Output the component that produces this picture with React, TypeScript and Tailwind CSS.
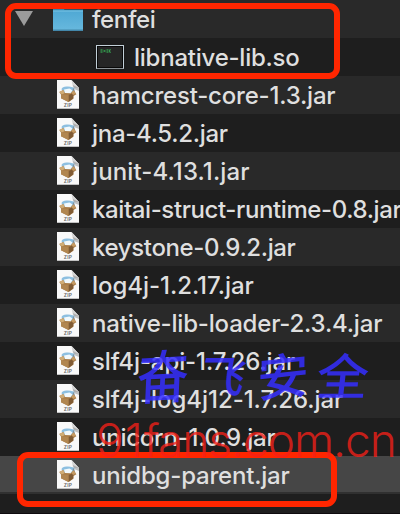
import React from "react";

type Entry = { name: string; kind: "folder" | "exec" | "zip"; tracking: string };

const entries: Entry[] = [
  { name: "fenfei", kind: "folder", tracking: "tracking-[-0.36px]" },
  { name: "libnative-lib.so", kind: "exec", tracking: "tracking-[-0.24px]" },
  { name: "hamcrest-core-1.3.jar", kind: "zip", tracking: "tracking-[-0.2px]" },
  { name: "jna-4.5.2.jar", kind: "zip", tracking: "tracking-[-0.3px]" },
  { name: "junit-4.13.1.jar", kind: "zip", tracking: "tracking-[0.12px]" },
  { name: "kaitai-struct-runtime-0.8.jar", kind: "zip", tracking: "tracking-[-0.4px]" },
  { name: "keystone-0.9.2.jar", kind: "zip", tracking: "tracking-[-0.36px]" },
  { name: "log4j-1.2.17.jar", kind: "zip", tracking: "tracking-[-0.04px]" },
  { name: "native-lib-loader-2.3.4.jar", kind: "zip", tracking: "tracking-[-0.19px]" },
  { name: "slf4j-api-1.7.26.jar", kind: "zip", tracking: "tracking-[-0.1px]" },
  { name: "slf4j-log4j12-1.7.26.jar", kind: "zip", tracking: "tracking-[-0.06px]" },
  { name: "unicorn-1.0.9.jar", kind: "zip", tracking: "tracking-[-0.24px]" },
  { name: "unidbg-parent.jar", kind: "zip", tracking: "tracking-[-0.2px]" },
];

function FolderIcon() {
  return (
    <svg width="30" height="31" viewBox="0 0 30 31" className="shrink-0">
      <defs>
        <linearGradient id="folder" x1="0" y1="0" x2="0" y2="1">
          <stop offset="0" stopColor="#4fa8d4" />
          <stop offset="1" stopColor="#68b9de" />
        </linearGradient>
      </defs>
      <path d="M0 9V5h10l1.500 1.500H30V10H0z" fill="#3786ad" />
      <path d="M0 7.500h30V27q0 1-1 1H1q-1 0-1-1z" fill="url(#folder)" />
      <path d="M0 7.500h30v1H0z" fill="#79c2e4" />
      <path d="M0 26.500h30v.5q0 1-1 1H1q-1 0-1-1z" fill="#4387aa" />
    </svg>
  );
}

function ExecIcon() {
  return (
    <div className="h-6 w-7 shrink-0 border border-[#c3d0d8] border-b-[#8c9195] bg-[#090909] p-px shadow">
      <div className="h-full bg-[#262626] pl-[2px] pt-[2px]">
        <svg width="12" height="4" viewBox="0 0 12 4" className="block">
          <path
            d="M.5.8h2M.5 2h2M.5 3.2h2M3.5.8l2 2.4M5.5.8l-2 2.4M6.5.8h2M6.5 2h2M6.5 3.2h2M11 .8H9.5v2.4H11"
            stroke="#36a852"
            strokeWidth=".9"
            fill="none"
          />
        </svg>
      </div>
    </div>
  );
}

function ZipIcon() {
  return (
    <svg width="22" height="29" viewBox="0 0 22 29" className="shrink-0">
      <path d="M0 0h14.500L22 8v21H0z" fill="#f9f9f9" />
      <path d="M14.500 0 22 8h-4.500q-1.500 0-1.800-2z" fill="#d5d5d5" />
      <path d="M16 5 22 8v3l-5-2z" fill="#888" opacity=".5" />
      <path d="M4.500 9q1-3 6.500-2.500t6.500 1.500l-1 5H6z" fill="#8dbfe0" />
      <path d="M7 9.500 12.500 8.500l3 2-2 2.500H8z" fill="#f2f9fc" />
      <path d="M16 8q2.800 2 1.500 7L15 17z" fill="#7f8f9b" />
      <path d="m2.300 12 4-2 1.500 3 6 .3 3-2.800 2.600 3.700-3 1.800v2.800L11.500 22 4 18.200V14.500z" fill="#aa7e49" />
      <path d="m2.300 12 4-2 1.500 3L5 14.500z" fill="#d1ad76" />
      <path d="m11.500 15 4.800-2v5.200L11.500 22z" fill="#805b34" />
      <path d="m4 14.500 7.500.5V22L4 18.200z" fill="#b18650" />
      <path d="m14.200 12.300 2.600-1.800 2 2.700-2.800 1.900z" fill="#c69b63" />
      <text x="11" y="26.800" textAnchor="middle" fontFamily="Inter, sans-serif" fontSize="4.800" fontWeight="600" fill="#666" letterSpacing=".3">
        ZIP
      </text>
      <path d="M0 28.300h22v.7H0z" fill="#aaa" />
    </svg>
  );
}

function EntryIcon({ kind }: { kind: Entry["kind"] }) {
  if (kind === "folder") {
    return (
      <div className="flex w-[92px] shrink-0 items-center gap-5 pl-[15px] pt-[3px]">
        <svg width="18" height="15" viewBox="0 0 18 15">
          <path d="M0 0h18L9 15z" fill="#9b9b9b" />
        </svg>
        <FolderIcon />
      </div>
    );
  }
  if (kind === "exec") {
    return (
      <div className="w-[134px] shrink-0 pl-24 pt-[7px]">
        <ExecIcon />
      </div>
    );
  }
  return (
    <div className="w-[92px] shrink-0 pl-[57px] pt-1">
      <ZipIcon />
    </div>
  );
}

function Row({ entry, index, selected }: { entry: Entry; index: number; selected: boolean }) {
  const bg = selected
    ? "bg-[#464646] shadow-[inset_0_-2px_#303030]"
    : index % 2 === 0
      ? "bg-[#292929]"
      : "bg-[#1e1e1e]";
  return (
    <li className={`flex h-[38px] items-start ${bg}`}>
      <EntryIcon kind={entry.kind} />
      <span className={`whitespace-nowrap pt-0.5 text-2xl/9 font-[450] text-[#dfdfdf] ${entry.tracking}`}>
        {entry.name}
      </span>
    </li>
  );
}

export default function App() {
  return (
    <div className="relative h-[514px] w-[400px] overflow-hidden bg-[#1e1e1e] font-['Inter',sans-serif]">
      <ul className="flex flex-col">
        {entries.map((entry, i) => (
          <Row key={entry.name} entry={entry} index={i} selected={i === entries.length - 1} />
        ))}
      </ul>

      <div className="absolute left-[5px] top-[3px] h-[76px] w-[335px] rounded-[11px] border-[6px] border-[#ff2600]" />
      <div className="absolute left-[17px] top-[452px] h-[55px] w-[320px] rounded-[11px] border-[6px] border-[#ff2600]" />

      <div className="absolute left-[137px] top-[345px] flex gap-2 font-['Noto_Sans_CJK_SC',sans-serif] text-[52px]/[58px] font-medium text-[#352eff]/85">
        <span className="-rotate-3 -skew-x-6 scale-y-110">奋</span>
        <span className="-skew-x-12 scale-x-90 scale-y-85">飞</span>
        <span className="-rotate-6 -skew-x-6 scale-y-95">安</span>
        <span className="-skew-x-6 scale-y-95">全</span>
      </div>
      <div className="absolute left-[96px] top-[414px] whitespace-nowrap text-[46px]/[52px] font-light tracking-[-1px] text-[#f52018]/80">
        <span className="tracking-[1px]">91</span>fans.com.cn
      </div>
      <div className="absolute inset-x-0 bottom-0 h-px bg-[#0f0b0e]" />
    </div>
  );
}
